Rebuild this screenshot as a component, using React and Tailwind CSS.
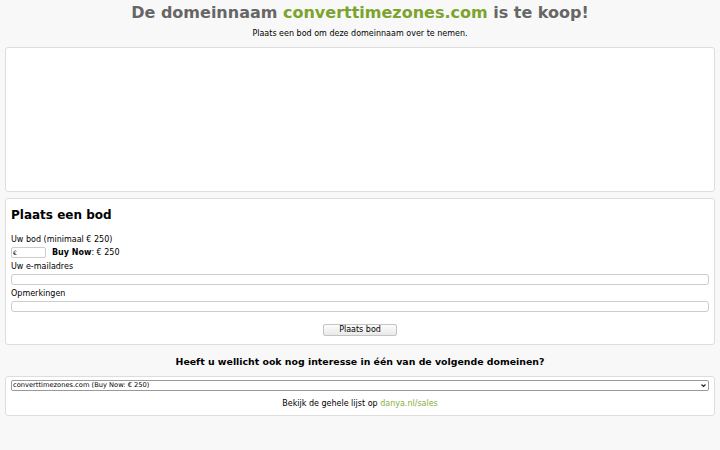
import React from "react";

const App = () => {
  return (
    <div className="min-h-[450px] bg-[#f8f8f8] px-[5px] pt-[3px] text-[8px] text-black" style={{ fontFamily: '"DejaVu Sans", sans-serif' }}>
      <h1 className="text-center text-[16px] font-bold text-[#666] leading-[20px]">
        De domeinnaam <span className="text-[#7ba32d]">converttimezones.com</span> is te koop!
      </h1>
      <p className="text-center mt-[6px] leading-[10px]">Plaats een bod om deze domeinnaam over te nemen.</p>

      {/* lege advertentie-ruimte */}
      <div className="mt-[8px] h-[145px] bg-white border border-[#ddd] rounded-[3px]"></div>

      <div className="mt-[6px] bg-white border border-[#ddd] rounded-[3px] px-[5px] pb-[8px]">
        <h2 className="text-[12px] font-bold mt-[9px] leading-[14px]">Plaats een bod</h2>
        <div className="mt-[13px] leading-[10px]">Uw bod (minimaal € 250)</div>
        <div className="flex items-center gap-[6px] mt-[2px] h-[11px]">
          <input
            type="text"
            defaultValue="€"
            className="w-[35px] h-[11px] border border-[#ccc] rounded-[2px] text-[6px] px-[1px]"
          />
          <span className="leading-[10px]">
            <b>Buy Now</b>: € 250
          </span>
        </div>
        <div className="mt-[4px] leading-[10px]">Uw e-mailadres</div>
        <input type="text" className="block w-full h-[11px] border border-[#ccc] rounded-[3px] mt-[2px]" />
        <div className="mt-[4px] leading-[10px]">Opmerkingen</div>
        <input type="text" className="block w-full h-[11px] border border-[#ccc] rounded-[3px] mt-[2px]" />
        <div className="flex justify-center mt-[12px]">
          <button className="w-[74px] h-[12px] border border-[#c4c4c4] rounded-[2px] bg-gradient-to-b from-[#fcfcfc] to-[#e9e9e9] text-[8px] leading-[10px]">
            Plaats bod
          </button>
        </div>
      </div>

      <h3 className="text-center text-[9.4px] font-bold mt-[11px] leading-[12px]">
        Heeft u wellicht ook nog interesse in één van de volgende domeinen?
      </h3>

      <div className="mt-[8px] bg-white border border-[#ddd] rounded-[3px] px-[5px] pt-[3px] pb-[6px]">
        <div className="relative">
          <select className="block w-full h-[11px] appearance-none bg-white border border-[#999] rounded-[2px] text-[6.7px] leading-[9px] pl-[1px] pr-[10px]">
            <option>converttimezones.com (Buy Now: € 250)</option>
          </select>
          <svg className="absolute right-[3px] top-[3px] w-[5px] h-[5px] pointer-events-none" viewBox="0 0 10 10">
            <path d="M1 3 L5 7 L9 3" fill="none" stroke="#222" strokeWidth="2.2" />
          </svg>
        </div>
        <p className="text-center mt-[8px] leading-[10px]">
          Bekijk de gehele lijst op <a className="text-[#8aae3c]">danya.nl/sales</a>
        </p>
      </div>
    </div>
  );
};

export default App;
